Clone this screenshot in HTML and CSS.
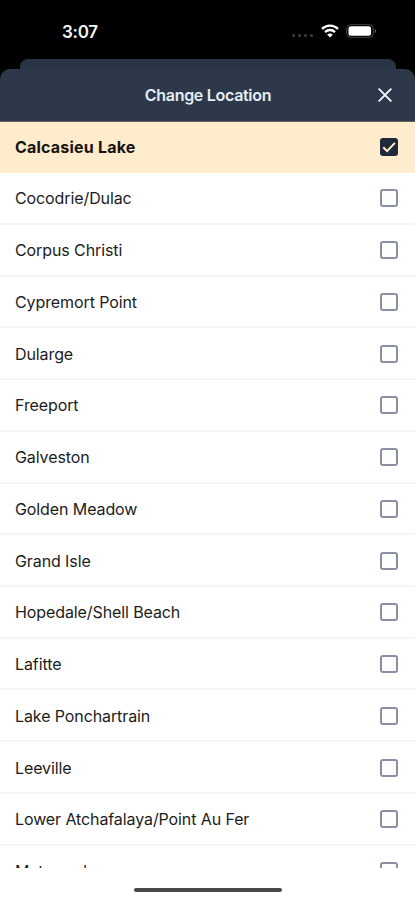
FILE: index.html
```html
<!DOCTYPE html>
<html lang="en">
<head>
<meta charset="utf-8">
<title>Change Location</title>
<link rel="stylesheet" href="styles.css">
</head>
<body>
<div class="phone">
  <div class="status">
    <span class="time">3:07</span>
    <div class="indicators">
      <span class="dots"><i></i><i></i><i></i><i></i></span>
      <svg class="wifi" width="18" height="14" viewBox="0 0 18 14" fill="none" stroke="#fff" stroke-width="2.3">
        <path d="M1 4.9C5.5.4 12.5.4 17 4.9"/>
        <path d="M4 8.1c2.9-2.8 7.1-2.8 10 0"/>
        <path d="M9 13.5l-2.9-2.9c1.6-1.5 4.2-1.5 5.8 0z" fill="#fff" stroke="none"/>
      </svg>
      <svg class="battery" width="31" height="14" viewBox="0 0 31 14">
        <rect x=".7" y=".7" width="26.6" height="12.6" rx="4" fill="none" stroke="#444" stroke-width="1"/>
        <rect x="2.5" y="2.3" width="22.6" height="9.4" rx="2.5" fill="#fff"/>
        <path d="M28.7 4.8c2 .8 2 3.6 0 4.4z" fill="#555"/>
      </svg>
    </div>
  </div>
  <div class="back-card"></div>
  <header class="header">
    <h1 class="title">Change Location</h1>
    <svg class="close" width="14" height="14" viewBox="0 0 14 14" stroke="#f4f8fc" stroke-width="1.9" stroke-linecap="round"><path d="M1.2 1.2l11.6 11.6M12.8 1.2L1.2 12.8"/></svg>
  </header>
  <ul class="list">
    <li class="row selected"><span>Calcasieu Lake</span><span class="box"><svg width="18" height="18" viewBox="0 0 18 18" fill="none" stroke="#fff0d0" stroke-width="2"><path d="M3.3 9.2l3.8 3.9 7.8-8.2"/></svg></span></li>
    <li class="row"><span>Cocodrie/Dulac</span><span class="box"></span></li>
    <li class="row"><span>Corpus Christi</span><span class="box"></span></li>
    <li class="row"><span>Cypremort Point</span><span class="box"></span></li>
    <li class="row"><span>Dularge</span><span class="box"></span></li>
    <li class="row"><span>Freeport</span><span class="box"></span></li>
    <li class="row"><span>Galveston</span><span class="box"></span></li>
    <li class="row"><span>Golden Meadow</span><span class="box"></span></li>
    <li class="row"><span>Grand Isle</span><span class="box"></span></li>
    <li class="row"><span>Hopedale/Shell Beach</span><span class="box"></span></li>
    <li class="row"><span>Lafitte</span><span class="box"></span></li>
    <li class="row"><span>Lake Ponchartrain</span><span class="box"></span></li>
    <li class="row"><span>Leeville</span><span class="box"></span></li>
    <li class="row"><span>Lower Atchafalaya/Point Au Fer</span><span class="box"></span></li>
    <li class="row"><span>Matagorda</span><span class="box"></span></li>
  </ul>
  <footer class="home"><span class="home-bar"></span></footer>
</div>
</body>
</html>
```
FILE: styles.css
```css
* { box-sizing: border-box; }
body { margin: 0; background: #000; font-family: Inter, sans-serif; }
.phone { width: 415px; height: 900px; display: flex; flex-direction: column; overflow: hidden; }
.status { height: 59px; flex: none; display: flex; justify-content: space-between; padding: 23px 38px 0 62px; color: #f5f5f5; }
.time { font-size: 17px; line-height: 18px; font-weight: 600; letter-spacing: -0.3px; }
.indicators { display: flex; align-items: flex-start; padding-top: 1px; }
.dots { display: flex; gap: 3px; padding-top: 10px; margin-right: 8px; }
.dots i { width: 3px; height: 3px; border-radius: 50%; background: #404040; }
.battery { margin-left: 7px; }
.back-card { height: 10px; flex: none; margin: 0 19px 0 20px; background: #293546; border-radius: 8px 8px 0 0; }
.header { height: 52.5px; flex: none; background: #2d394a; border-bottom: 1px solid #5f6268; border-radius: 10px 10px 0 0; display: grid; grid-template-columns: 1fr auto 1fr; align-items: center; padding: 0 23px 0 24px; }
.title { grid-column: 2; margin: 0; font-size: 16px; line-height: 20px; font-weight: 600; color: #e6edf4; letter-spacing: -0.3px; }
.close { justify-self: end; }
.list { margin: 0; padding: 0; list-style: none; height: 746.5px; flex: none; overflow: hidden; background: #fff; }
.row { height: 51.74px; display: flex; align-items: center; justify-content: space-between; padding: 1px 17px 0 15px; border-bottom: 2px solid #f5f5f6; font-size: 16px; line-height: 20px; letter-spacing: -0.1px; color: #1c1c1c; }
.selected { height: 51.6px; padding-top: 0; background: #feeccd; border-bottom: 0; font-weight: 700; letter-spacing: 0.2px; color: #17140f; }
.box { width: 18px; height: 18px; border: 2px solid #8b8fa6; border-radius: 3px; }
.selected .box { border: 0; background: #1e293b; }
.box svg { display: block; }
.home { flex: 1; background: #fff; display: flex; justify-content: center; padding-top: 20px; }
.home-bar { width: 148px; height: 4px; border-radius: 2px; background: #484848; }
```
